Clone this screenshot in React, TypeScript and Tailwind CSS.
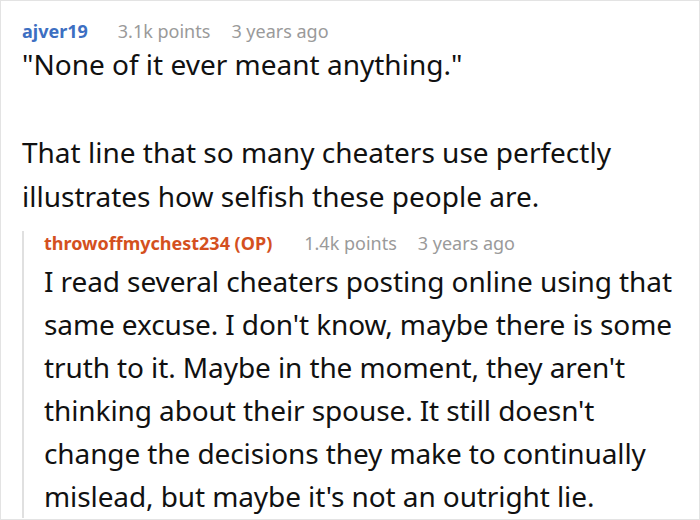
export default function App() {
  return (
    <div
      className="w-[700px] h-[520px] overflow-hidden border border-[#e3e3e3] bg-white text-[#111]"
      style={{ fontFamily: '"Noto Sans", "Open Sans", sans-serif' }}
    >
      <div className="pl-[21px] pt-[18px]">
        {/* top comment */}
        <div className="flex items-baseline gap-[30px] text-[18px] leading-[24px]">
          <span className="font-bold text-[#3d6fc2]">ajver19</span>
          <span className="text-[#9a9a9a]">3.1k points</span>
          <span className="-ml-[9px] text-[#9a9a9a]">3 years ago</span>
        </div>
        <div className="text-[28px] leading-[44px] -mt-[1px]">
          <p>"None of it ever meant anything."</p>
          <p className="mt-[44px]">
            That line that so many cheaters use perfectly
            <br />
            illustrates how selfish these people are.
          </p>
        </div>

        {/* OP reply */}
        <div className="mt-[28px] border-l-2 border-[#e0e0e0] pl-[20px]">
          <div className="-mt-[15px] flex items-baseline gap-[32px] text-[18px] leading-[24px]">
            <span className="font-bold text-[#d4501e]">
              throwoffmychest234 (OP)
            </span>
            <span className="text-[#9a9a9a]">1.4k points</span>
            <span className="-ml-[11px] text-[#9a9a9a]">3 years ago</span>
          </div>
          <p className="text-[28px] leading-[43px] pt-[5px] tracking-[-0.1px]">
            I read several cheaters posting online using that
            <br />
            same excuse. I don't know, maybe there is some
            <br />
            truth to it. Maybe in the moment, they aren't
            <br />
            thinking about their spouse. It still doesn't
            <br />
            change the decisions they make to continually
            <br />
            mislead, but maybe it's not an outright lie.
          </p>
        </div>
      </div>
    </div>
  );
}
